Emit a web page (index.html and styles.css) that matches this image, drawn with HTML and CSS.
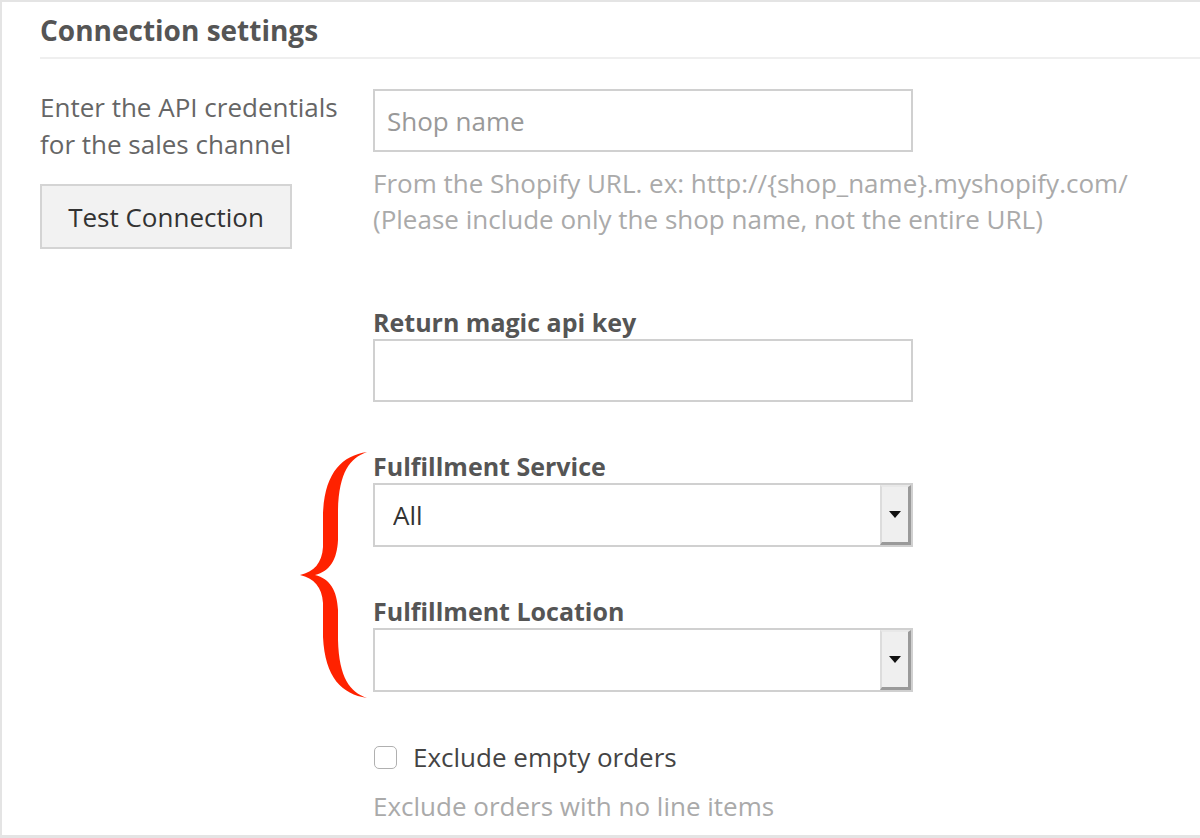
FILE: index.html
```html
<!DOCTYPE html>
<html lang="en">
<head>
<meta charset="utf-8">
<title>Connection settings</title>
<link rel="stylesheet" href="styles.css">
</head>
<body>
<section class="panel">
  <h2 class="panel-title">Connection settings</h2>
  <div class="settings">
    <div class="intro">
      <p class="intro-text">Enter the API credentials for the sales channel</p>
      <button class="btn" type="button">Test Connection</button>
    </div>
    <div class="fields">
      <div class="field">
        <input class="text-input" type="text" placeholder="Shop name">
        <p class="help">From the Shopify URL. ex: http://{shop_name}.myshopify.com/<br>(Please include only the shop name, not the entire URL)</p>
      </div>
      <div class="field field-spaced">
        <label class="field-label" for="magic-key">Return magic api key</label>
        <input class="text-input" id="magic-key" type="text">
      </div>
      <div class="group">
        <svg class="brace" width="72" height="252" viewBox="0 0 72 252" aria-hidden="true">
          <path d="M69 2 C44 6 27 22 25 63 L25 97 C24 113 16 122 2 125 C16 128 24 137 25 153 L25 187 C27 228 44 244 69 248 C52 242 41 228 40 190 L40 160 C39 140 32 129 17 125 C32 121 39 110 40 90 L40 60 C41 22 52 8 69 2 Z" fill="#ff2200"/>
        </svg>
        <div class="field">
          <label class="field-label" for="ff-service">Fulfillment Service</label>
          <div class="select">
            <select id="ff-service" class="select-control">
              <option>All</option>
            </select>
            <span class="select-button"><span class="select-arrow"></span></span>
          </div>
        </div>
        <div class="field field-gap">
          <label class="field-label" for="ff-location">Fulfillment Location</label>
          <div class="select">
            <select id="ff-location" class="select-control">
              <option></option>
            </select>
            <span class="select-button"><span class="select-arrow"></span></span>
          </div>
        </div>
      </div>
      <div class="check-field">
        <label class="check">
          <input type="checkbox" class="check-box">
          <span class="check-label">Exclude empty orders</span>
        </label>
        <p class="help">Exclude orders with no line items</p>
      </div>
    </div>
  </div>
</section>
</body>
</html>
```

FILE: styles.css
```css
html, body {
  margin: 0;
  padding: 0;
}

body {
  background: #e4e4e4;
  font-family: "Open Sans", "Noto Sans", sans-serif;
  color: #555;
  padding: 2px 0 3px 2px;
  height: 838px;
  box-sizing: border-box;
  overflow: hidden;
}

.panel {
  background: #fff;
  height: 833px;
  padding: 0 0 0 38px;
  box-sizing: border-box;
}

.panel-title {
  margin: 0;
  padding: 9px 0 0;
  height: 57px;
  box-sizing: border-box;
  font-size: 28px;
  line-height: 38px;
  font-weight: 700;
  color: #555;
  border-bottom: 2px solid #efefef;
}

.settings {
  display: flex;
  padding-top: 30px;
}

.intro {
  width: 333px;
  flex: none;
}

.intro-text {
  margin: 0;
  width: 310px;
  font-size: 26px;
  line-height: 37px;
  color: #666;
}

.btn {
  display: block;
  margin-top: 21px;
  width: 252px;
  height: 65px;
  background: #f2f2f2;
  border: 2px solid #d4d4d4;
  border-radius: 0;
  font-family: inherit;
  font-size: 26px;
  color: #333;
  padding: 0;
}

.fields {
  width: 540px;
  display: flex;
  flex-direction: column;
}

.text-input {
  display: block;
  width: 540px;
  height: 63px;
  box-sizing: border-box;
  border: 2px solid #d0d0d0;
  padding: 0 12px;
  font-family: inherit;
  font-size: 26px;
  color: #555;
  outline: none;
}

.text-input::placeholder {
  color: #999;
}

.help {
  margin: 13px 0 0;
  font-size: 26px;
  line-height: 36px;
  color: #aaa;
  white-space: nowrap;
}

.field-spaced {
  margin-top: 68px;
}

.field-label {
  display: block;
  font-size: 25px;
  line-height: 34px;
  font-weight: 700;
  color: #555;
}

.group {
  position: relative;
  margin-top: 47px;
}

.brace {
  position: absolute;
  left: -75px;
  top: 1px;
}

.field-gap {
  margin-top: 47px;
}

.select {
  display: flex;
  width: 540px;
  height: 64px;
  box-sizing: border-box;
  border: 2px solid #d0d0d0;
  background: #fff;
}

.select-control {
  flex: 1;
  min-width: 0;
  appearance: none;
  -webkit-appearance: none;
  border: 0;
  background: transparent;
  padding: 0 18px;
  font-family: inherit;
  font-size: 26px;
  color: #333;
  outline: none;
}

.select-button {
  flex: none;
  width: 31px;
  box-sizing: border-box;
  background: #efefef;
  border-top: 2px solid #e8e8e8;
  border-left: 2px solid #dcdcdc;
  border-right: 3px solid #9a9a9a;
  border-bottom: 3px solid #9a9a9a;
  display: flex;
  align-items: center;
  justify-content: center;
}

.select-arrow {
  width: 0;
  height: 0;
  border-left: 6px solid transparent;
  border-right: 6px solid transparent;
  border-top: 7px solid #111;
}

.check-field {
  margin-top: 47px;
}

.check {
  display: flex;
  align-items: center;
  gap: 16px;
}

.check-box {
  appearance: none;
  -webkit-appearance: none;
  margin: 0 0 0 1px;
  width: 23px;
  height: 23px;
  border: 1px solid #b0b0b0;
  border-radius: 5px;
  background: #fff;
}

.check-label {
  font-size: 26px;
  line-height: 36px;
  color: #444;
}

.check-field .help {
  margin-top: 13px;
}
```
